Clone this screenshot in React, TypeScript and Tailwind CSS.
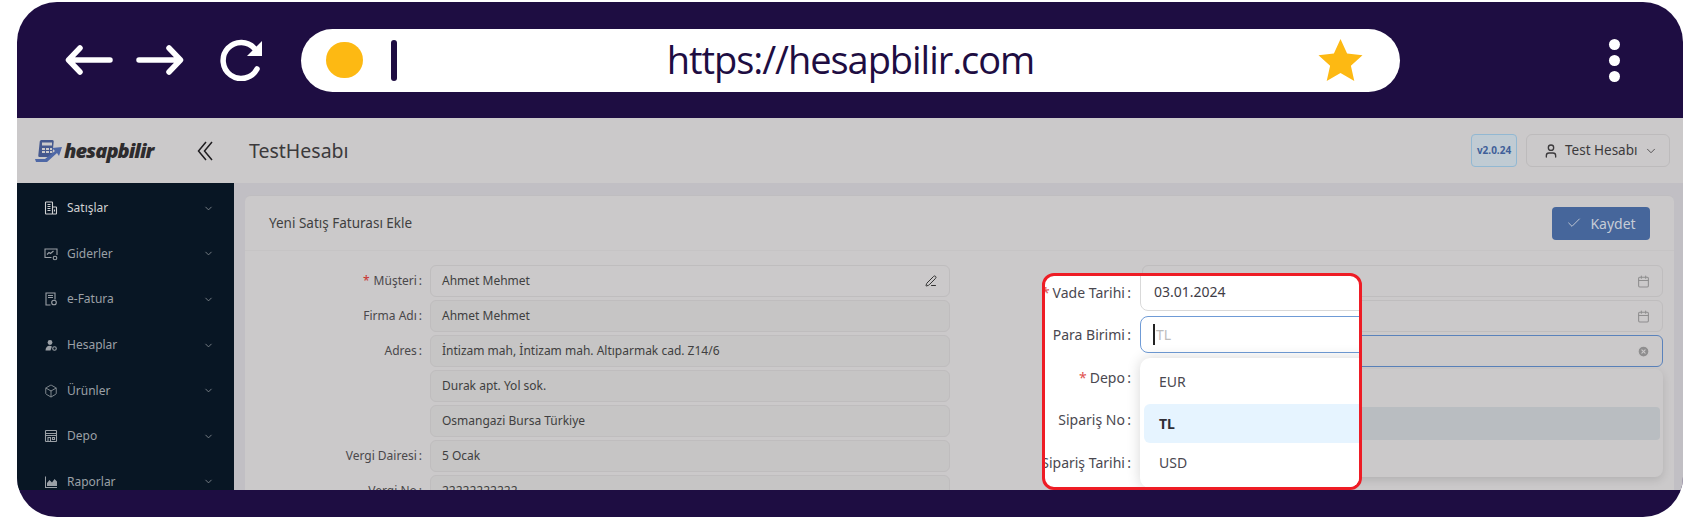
import React from "react";
import { Check, ChevronDown, PenLine, Calendar, User, CircleX, Box } from "lucide-react";

const font = "font-['Noto_Sans',sans-serif]";

const Logo = () => (
  <svg width="27" height="24" viewBox="0 0 27 24" className="shrink-0">
    <rect x="5" y="1" width="14" height="17" rx="1.5" fill="#46598f" transform="skewX(-6)" />
    <rect x="7" y="3.5" width="10" height="3" fill="#cbc9ca" />
    <path d="M7 9h3v2H7zM11 9h3v2h-3zM15 9h2v2h-2zM7 12h3v2H7zM11 12h3v2h-3zM15 12h2v2h-2z" fill="#cbc9ca" />
    <path d="M0 20 L10 20 L20 12 L17 9 L27 8 L24 17 L22 14 L12 23 L1 23 Z" fill="#4f68a6" />
  </svg>
);

const SatislarIcon = () => (
  <svg width="14" height="14" viewBox="0 0 14 14" fill="none" stroke="currentColor" strokeWidth="1.1">
    <rect x="1.500" y="1" width="7" height="12" rx="0.6" />
    <rect x="8.500" y="6" width="4" height="7" rx="0.6" />
    <path d="M3.500 3.500h3M3.500 5.500h3M3.500 7.500h3M3.500 9.500h3M10.500 8.500v2" />
  </svg>
);

const GiderlerIcon = () => (
  <svg width="14" height="14" viewBox="0 0 14 14" fill="none" stroke="currentColor" strokeWidth="1.1">
    <path d="M7.500 10.500H1V2h12v6" />
    <path d="M3 7.500l2-2 1.500 1L9.500 4" />
    <circle cx="11" cy="11" r="1.800" />
  </svg>
);

const FaturaIcon = () => (
  <svg width="14" height="14" viewBox="0 0 14 14" fill="none" stroke="currentColor" strokeWidth="1.1">
    <path d="M6.500 13H2V1h9v6.500" />
    <path d="M4 3.500h5M4 5.500h5" />
    <circle cx="10" cy="10.500" r="2.300" />
  </svg>
);

const HesaplarIcon = () => (
  <svg width="14" height="14" viewBox="0 0 14 14" fill="currentColor">
    <circle cx="6" cy="4.500" r="2.400" />
    <path d="M1.500 12.500c0-3 1.800-4.800 4-4.800 1 0 1.800.3 2.400.8L6.500 12.500z" />
    <circle cx="10.500" cy="10.500" r="1.800" fill="none" stroke="currentColor" strokeWidth="1.1" />
  </svg>
);

const DepoIcon = () => (
  <svg width="14" height="14" viewBox="0 0 14 14" fill="none" stroke="currentColor" strokeWidth="1.1">
    <rect x="1.500" y="1.500" width="11" height="11" rx="0.6" />
    <path d="M1.500 4.500h11M1.500 6.500h11M4 12.500v-4h2.500v4M8.500 8.500h2v2h-2z" />
  </svg>
);

const RaporlarIcon = () => (
  <svg width="14" height="14" viewBox="0 0 14 14" fill="currentColor">
    <path d="M1 1.500h1V12h11v1H1z" />
    <path d="M3 11V8l2.500-3 2.500 2.500L10.500 4 13 6.500V11z" />
  </svg>
);

const menu = [
  { label: "Satışlar", icon: <SatislarIcon />, active: true },
  { label: "Giderler", icon: <GiderlerIcon /> },
  { label: "e-Fatura", icon: <FaturaIcon /> },
  { label: "Hesaplar", icon: <HesaplarIcon /> },
  { label: "Ürünler", icon: <Box size={14} strokeWidth={1.4} /> },
  { label: "Depo", icon: <DepoIcon /> },
  { label: "Raporlar", icon: <RaporlarIcon /> },
];

const rows = [
  { label: "Müşteri", value: "Ahmet Mehmet", required: true, editable: true },
  { label: "Firma Adı", value: "Ahmet Mehmet" },
  { label: "Adres", value: "İntizam mah, İntizam mah. Altıparmak cad. Z14/6" },
  { label: "", value: "Durak apt. Yol sok." },
  { label: "", value: "Osmangazi Bursa Türkiye" },
  { label: "Vergi Dairesi", value: "5 Ocak" },
  { label: "Vergi No", value: "22222222222" },
];

const overlayLabels = [
  { label: "Vade Tarihi", required: true },
  { label: "Para Birimi" },
  { label: "Depo", required: true },
  { label: "Sipariş No" },
  { label: "Sipariş Tarihi" },
];

const BrowserBar = () => (
  <div className="h-[116px] shrink-0 flex items-center">
    <div className="w-[284px] flex items-center pl-[48px] shrink-0">
      <svg width="48" height="32" viewBox="0 0 48 32" fill="none" stroke="#fff" strokeWidth="5.5" strokeLinecap="round" strokeLinejoin="round">
        <path d="M45 16H4M15 4 3.500 16 15 28" />
      </svg>
      <svg width="48" height="32" viewBox="0 0 48 32" fill="none" stroke="#fff" strokeWidth="5.5" strokeLinecap="round" strokeLinejoin="round" className="ml-[23px]">
        <path d="M3 16h41M33 4l11.500 12L33 28" />
      </svg>
      <svg width="44" height="42" viewBox="0 0 44 42" fill="none" className="ml-[36px]">
        <path d="M37 30a18 18 0 1 1-2-20" stroke="#fff" strokeWidth="5.5" strokeLinecap="round" />
        <path d="M42 2v15H27z" fill="#fff" />
      </svg>
    </div>
    <div className="w-[1099px] h-[63px] bg-white rounded-full grid grid-cols-[96px_1fr_96px] items-center shrink-0">
      <div className="flex items-center pl-[25px]">
        <div className="w-[37px] h-[36px] rounded-full bg-[#fdb913] shrink-0" />
        <div className="w-[6px] h-[41px] rounded-full bg-[#1e0d42] ml-[28px] shrink-0" />
      </div>
      <div className="text-center text-[38px] leading-none tracking-[-1.05px] text-[#1e0d42] font-['Open_Sans',sans-serif] pb-[3px]">https://hesapbilir.com</div>
      <div className="pl-[14px]">
        <svg width="45" height="42" viewBox="0 0 45 42" fill="#fdb913">
          <path d="M22.500 0l6.600 14.600 15.400 1.600-11.600 10.600 3.400 15.200-13.800-8-13.800 8 3.400-15.200L.5 16.200l15.400-1.600z" />
        </svg>
      </div>
    </div>
    <div className="flex-1 flex flex-col items-center gap-[5px] pl-[146px]">
      <div className="w-[11px] h-[11px] rounded-full bg-white" />
      <div className="w-[11px] h-[11px] rounded-full bg-white" />
      <div className="w-[11px] h-[11px] rounded-full bg-white" />
    </div>
  </div>
);

const AppHeader = () => (
  <div className="h-[65px] shrink-0 flex items-center bg-[#cbc9ca] pr-[13px]">
    <div className="pl-[18px] w-[180px] flex items-center gap-[2px] shrink-0">
      <Logo />
      <span className="text-[20px] font-extrabold italic tracking-[-0.95px] text-[#2e2c2e] font-['Open_Sans',sans-serif]">hesapbilir</span>
    </div>
    <svg width="16" height="20" viewBox="0 0 16 20" fill="none" stroke="#1f1d20" strokeWidth="1.5" className="shrink-0">
      <path d="M9 1 1.500 10 9 19M15 1 7.500 10 15 19" />
    </svg>
    <div className="ml-[36px] text-[19.5px] text-[#3c3a3c] flex-1">TestHesabı</div>
    <div className="w-[46px] h-[33px] rounded-[4px] border border-[#92b8d2] bg-[#c0cbd3] text-[10px] font-bold text-[#3f5f99] flex items-center justify-center">v2.0.24</div>
    <div className="w-[144px] h-[33px] ml-[9px] rounded-[6px] border border-[#bdbbbc] flex items-center pl-[16px] text-[#3c3a3c] text-[13.5px]">
      <User size={16} />
      <span className="ml-[6px]">Test Hesabı</span>
      <ChevronDown size={14} strokeWidth={1.4} className="ml-[7px]" />
    </div>
  </div>
);

const Sidebar = () => (
  <div className="w-[217px] shrink-0 bg-[#081624] pt-[2.5px] overflow-hidden">
    {menu.map((item) => (
      <div key={item.label} className={`h-[45.6px] flex items-center pl-[27px] pr-[20px] text-[12px] ${item.active ? "text-[#cfd0d2]" : "text-[#9ba0a6]"}`}>
        <span className="w-[14px] h-[14px] shrink-0">{item.icon}</span>
        <span className="ml-[9px] flex-1">{item.label}</span>
        <ChevronDown size={11} className="text-[#7d848b]" />
      </div>
    ))}
  </div>
);

const FormRows = () => (
  <div className="w-[705px] shrink-0">
    {rows.map((row, i) => (
      <div key={i} className="h-[32px] mb-[3px] flex items-center">
        <div className="w-[178px] text-right text-[12px] text-[#4a484a] pr-[1px]">
          {row.required && <span className="text-[#c9302c] mr-[4px]">*</span>}
          {row.label && `${row.label}\u2009:`}
        </div>
        <div className={`ml-[7px] w-[520px] h-[32px] rounded-[6px] border border-[#bfbdbe] flex items-center pl-[11px] pr-[12px] text-[12px] text-[#403f40] ${i === 0 ? "bg-[#cbc9ca]" : "bg-[#c6c5c5]"}`}>
          <span className="flex-1">{row.value}</span>
          {row.editable && <PenLine size={12} className="text-[#333]" />}
        </div>
      </div>
    ))}
  </div>
);

const RightRows = () => (
  <div className="ml-[192px] w-[521px] relative">
    <div className="h-[32px] mb-[3px] rounded-[6px] border border-[#bfbdbe] flex items-center justify-end pr-[12px] text-[#8f8e8f]">
      <Calendar size={13} />
    </div>
    <div className="h-[32px] mb-[3px] rounded-[6px] border border-[#bfbdbe] flex items-center justify-end pr-[12px] text-[#8f8e8f]">
      <Calendar size={13} />
    </div>
    <div className="h-[32px] mb-[3px] rounded-[6px] border border-[#5a82bb] flex items-center justify-end pr-[12px]">
      <CircleX size={13} fill="#8f8e8f" className="text-[#cbc9ca]" />
    </div>
    <div className="absolute top-[104px] left-0 right-0 h-[108px] rounded-[8px] bg-[#cbc9ca] shadow-[0_3px_9px_rgba(0,0,0,0.12)] pt-[38px] px-[3px]">
      <div className="h-[33px] rounded-[4px] bg-[#b9bdc1]" />
    </div>
    <div className="h-[32px] mt-[140px] rounded-[6px] border border-[#bfbdbe]" />
  </div>
);

const Highlight = () => (
  <div className="absolute left-[1025px] top-[271px] w-[320px] h-[217px] rounded-[12px] border-[3px] border-[#ee1c25] bg-white overflow-hidden flex text-[14px] text-[#4a4850]">
    <div className="w-[86px] shrink-0 -mt-[5px]">
      {overlayLabels.map((item) => (
        <div key={item.label} className="h-[42.5px] flex items-center justify-end whitespace-nowrap">
          {item.required && <span className="text-[#e0524f] mr-[3px]">*</span>}
          {item.label}{"\u2009"}:
        </div>
      ))}
    </div>
    <div className="ml-[9px] w-[300px] shrink-0">
      <div className="h-[45px] -mt-[10px] rounded-[8px] border border-[#d9d9d9] flex items-center pl-[13px] pt-[5px] text-[#3f3d46]">03.01.2024</div>
      <div className="h-[37px] mt-[5px] rounded-[8px] border-[1.5px] border-[#6f9bd6] flex items-center pl-[12px] text-[#bdbdbd]">
        <span className="w-[2px] h-[21px] bg-[#222] mr-[1px]" />
        TL
      </div>
      <div className="h-[130px] mt-[5px] rounded-[10px] bg-white shadow-[0_0_14px_rgba(0,0,0,0.16)] pt-[4px] pl-[4px]">
        <div className="h-[42px] flex items-center pl-[15px] pb-[3px]">EUR</div>
        <div className="h-[39px] rounded-[6px] bg-[#e6f4ff] flex items-center pl-[15px] font-bold text-[#2f2d35]">TL</div>
        <div className="h-[39px] flex items-center pl-[15px]">USD</div>
      </div>
    </div>
  </div>
);

const App = () => (
  <div className={`w-[1700px] h-[520px] bg-white pt-[2px] pl-[17px] ${font}`}>
    <div className="w-[1666px] h-[515px] rounded-[40px] bg-[#1e0d42] overflow-hidden flex flex-col relative">
      <BrowserBar />
      <div className="h-[372px] shrink-0 flex flex-col overflow-hidden">
        <AppHeader />
        <div className="flex-1 flex min-h-0">
          <Sidebar />
          <div className="flex-1 bg-[#c1bfc4] pt-[12px] pl-[11px] pr-[9px] overflow-hidden">
            <div className="rounded-t-[6px] bg-[#cbc9ca] h-[320px] border-t border-[#bfbdc0] overflow-hidden">
              <div className="h-[55px] flex items-center justify-between pl-[24px] pr-[24px] border-b border-[#c6c4c5]">
                <span className="text-[13.5px] text-[#403f40]">Yeni Satış Faturası Ekle</span>
                <button className="w-[98px] h-[33px] rounded-[4px] bg-[#46669b] text-[#c6ccd6] text-[14px] flex items-center justify-center gap-[8px]">
                  <Check size={16} strokeWidth={1.4} />
                  Kaydet
                </button>
              </div>
              <div className="flex pt-[14px]">
                <FormRows />
                <RightRows />
              </div>
            </div>
          </div>
        </div>
      </div>
      <Highlight />
    </div>
  </div>
);

export default App;
